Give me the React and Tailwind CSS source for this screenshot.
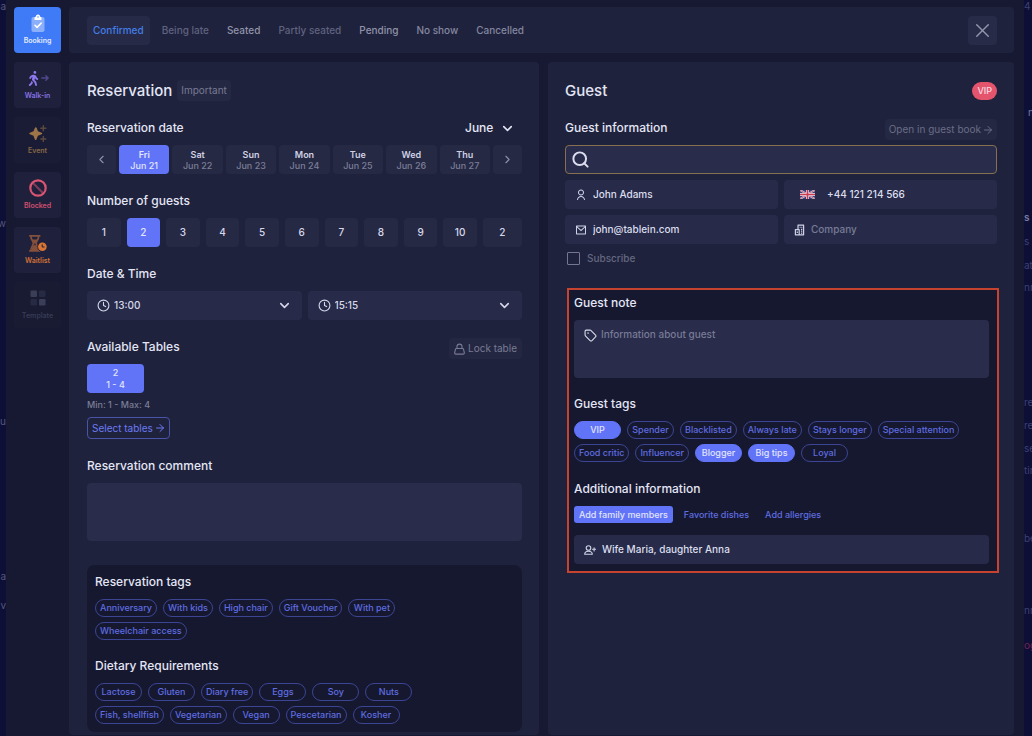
import React, { useState } from 'react';
import { ArrowRight, ChevronDown, ChevronLeft, ChevronRight, Clock, Search, Tag, X } from 'lucide-react';
import { FaPersonWalking } from 'react-icons/fa6';
import { RiMailLine, RiUserLine } from 'react-icons/ri';
import clsx from 'clsx';

const STATUSES = [
  { name: 'Confirmed', color: 'text-[#437ee6]' },
  { name: 'Being late', color: 'text-[#5f6380]' },
  { name: 'Seated', color: 'text-[#9093aa]' },
  { name: 'Partly seated', color: 'text-[#5f6380]' },
  { name: 'Pending', color: 'text-[#9093aa]' },
  { name: 'No show', color: 'text-[#8487a0]' },
  { name: 'Cancelled', color: 'text-[#8487a0]' },
];

const DAYS = [
  ['Fri', 'Jun 21'],
  ['Sat', 'Jun 22'],
  ['Sun', 'Jun 23'],
  ['Mon', 'Jun 24'],
  ['Tue', 'Jun 25'],
  ['Wed', 'Jun 26'],
  ['Thu', 'Jun 27'],
];

const RESERVATION_TAGS = ['Anniversary', 'With kids', 'High chair', 'Gift Voucher', 'With pet', 'Wheelchair access'];

const DIETARY_TAGS = [
  'Lactose', 'Gluten', 'Diary free', 'Eggs', 'Soy', 'Nuts',
  'Fish, shellfish', 'Vegetarian', 'Vegan', 'Pescetarian', 'Kosher',
];

const GUEST_TAGS = [
  'VIP', 'Spender', 'Blacklisted', 'Always late', 'Stays longer', 'Special attention',
  'Food critic', 'Influencer', 'Blogger', 'Big tips', 'Loyal',
];

function BookingIcon() {
  return (
    <svg width="14" height="18" viewBox="0 0 14 18" fill="none">
      <rect x="0.5" y="3" width="13" height="15" rx="2" fill="#fff" fillOpacity="0.4" />
      <path d="M3.500 6V3.800C3.500 3.200 4 3 4.600 3 4.800 1.500 5.700 0.400 7 0.400s2.200 1.100 2.400 2.600c.6 0 1.100.2 1.100.8V6z" fill="#fff" />
      <circle cx="7" cy="3" r="0.8" fill="#5f96f8" />
      <path d="M4 11.300l2.100 2.100 4-4.200" stroke="#fff" strokeWidth="1.6" strokeLinecap="round" strokeLinejoin="round" />
    </svg>
  );
}

function WalkInIcon() {
  return (
    <span className="flex items-center text-[#8d78ee]">
      <FaPersonWalking size={15} />
      <svg width="8" height="8" viewBox="0 0 8 8" fill="none" stroke="currentColor" strokeOpacity="0.45" strokeWidth="1.3" strokeLinecap="round" strokeLinejoin="round">
        <path d="M0.800 4h6.200M4.800 1.700L7.200 4 4.800 6.300" />
      </svg>
    </span>
  );
}

function EventIcon() {
  return (
    <svg width="18" height="17" viewBox="0 0 18 17" fill="none">
      <path d="M6.800 2.200c.5 0 .7.3.8.6l1.300 3.400 3.700 1.500c.8.300.8 1.300 0 1.600l-3.700 1.500-1.500 3.600c-.3.700-1.200.7-1.500 0l-1.400-3.600L.9 9.300c-.8-.3-.8-1.300 0-1.600l3.600-1.500L6 2.800c.2-.4.400-.6.800-.6z" fill="#9d7548" />
      <path d="M14.300 0.800v5M11.800 3.300h5M14.300 11.500v5M11.800 14h5" stroke="#9d7548" strokeOpacity="0.5" strokeWidth="1.4" strokeLinecap="round" />
    </svg>
  );
}

function BlockedIcon() {
  return (
    <svg width="18" height="18" viewBox="0 0 18 18" fill="none" stroke="#dc5471" strokeWidth="2.2">
      <path d="M3.500 3.500l11 11" strokeOpacity="0.5" />
      <circle cx="9" cy="9" r="7.7" />
    </svg>
  );
}

function WaitlistIcon() {
  return (
    <svg width="18" height="17" viewBox="0 0 18 17" fill="none">
      <path
        d="M.8.9h9.900M.8 15.800h9.900M1.900.9c0 4.300 2.400 4.800 2.400 7.400S1.900 11.700 1.900 15.600M9.600.9c0 4.300-2.400 4.800-2.400 7.400s2.400 3.400 2.400 7.300"
        stroke="#85503b"
        strokeWidth="1.7"
        strokeLinecap="round"
      />
      <path d="M2.500 15.600c.2-3 1.200-4.700 3.200-6.200 2 1.500 3.100 3.200 3.300 6.200zM3.200 4.600h5L6.700 8.600H4.800z" fill="#85503b" />
      <circle cx="13.4" cy="11.8" r="5" fill="#1f213c" />
      <circle cx="13.4" cy="11.8" r="4.3" fill="#d87534" />
      <path d="M13.200 9.700V12h1.900" stroke="#1d203a" strokeWidth="1" strokeLinecap="round" strokeLinejoin="round" />
    </svg>
  );
}

function TemplateIcon() {
  return (
    <svg width="16" height="16" viewBox="0 0 16 16">
      <rect x="0.5" y="0.5" width="6.5" height="6.5" rx="1.2" fill="#3b3e57" />
      <rect x="9" y="0.5" width="6.5" height="6.5" rx="1.2" fill="#272a43" />
      <rect x="0.5" y="9" width="6.5" height="6.5" rx="1.2" fill="#272a43" />
      <rect x="9" y="9" width="6.5" height="6.5" rx="1.2" fill="#3b3e57" />
    </svg>
  );
}

function LockIcon() {
  return (
    <svg width="11" height="12" viewBox="0 0 11 12" fill="none" stroke="currentColor" strokeWidth="1.1">
      <path d="M3 5.500V3.600a2.500 2.500 0 015 0v1.900" />
      <path d="M2.400 5.500h6.200c.5 0 .8.2.9.6l.8 3.500c.2.900-.3 1.500-1.100 1.500H1.800c-.8 0-1.300-.6-1.100-1.500l.8-3.500c.1-.4.400-.6.900-.6z" strokeLinejoin="round" />
    </svg>
  );
}

function CompanyIcon() {
  return (
    <svg width="11" height="12" viewBox="0 0 11 12" fill="none" stroke="currentColor" strokeWidth="1.2">
      <path d="M4 5V1.200h5.600v9.600H1.400V5.600h3.800v5.200" strokeLinejoin="round" />
      <path d="M5.700 3.300h.8M7.500 3.300h.8M7 5.300h1.300M7 7.200h1.300M7 9.100h1.300M3.300 7.600v1.500" />
    </svg>
  );
}

function AddPersonIcon() {
  return (
    <svg width="12" height="10" viewBox="0 0 12 10" fill="none" stroke="currentColor" strokeWidth="1.1" strokeLinecap="round" strokeLinejoin="round">
      <circle cx="4.5" cy="3" r="2.3" />
      <path d="M.7 9.300c0-2 1.300-3 3.800-3s3.800 1 3.800 3z" />
      <path d="M10.100 2.700v3.200M8.500 4.300h3.200" />
    </svg>
  );
}

function UkFlag() {
  return (
    <svg width="15" height="9" viewBox="0 0 15 9">
      <path fill="#39417a" d="M0 0h15v9H0z" />
      <path d="M0 0l15 9M15 0L0 9" stroke="#d5d3e6" strokeWidth="1.9" />
      <path d="M0 0l15 9M15 0L0 9" stroke="#cf4058" strokeWidth="0.7" />
      <path d="M7.500 0v9M0 4.500h15" stroke="#e2dfee" strokeWidth="3" />
      <path d="M7.500 0v9M0 4.500h15" stroke="#d03a50" strokeWidth="1.6" />
    </svg>
  );
}

const NAV = [
  { name: 'Booking', Icon: BookingIcon, style: 'bg-[#3f7bf7] text-[#e4ebfd]' },
  { name: 'Walk-in', Icon: WalkInIcon, style: 'bg-[#1f213c] text-[#8672e4]' },
  { name: 'Event', Icon: EventIcon, style: 'bg-[#1a1c35] text-[#886846]' },
  { name: 'Blocked', Icon: BlockedIcon, style: 'bg-[#1f213c] text-[#d04f6e]' },
  { name: 'Waitlist', Icon: WaitlistIcon, style: 'bg-[#1f213c] text-[#cc7037]' },
  { name: 'Template', Icon: TemplateIcon, style: 'bg-[#191b33] text-[#383b54]' },
];

// Words of the page behind the dialog that peek out at its sides
const BEHIND_LEFT = [
  { text: 'na', space: 'mt-0' },
  { text: 'w', space: 'mt-[205px]' },
  { text: 'u', space: 'mt-[186px]' },
  { text: 'a', space: 'mt-[143px]' },
  { text: 'v', space: 'mt-[17px]' },
];

const BEHIND_RIGHT = [
  { text: '4', space: 'mt-0' },
  { text: 'n', space: 'mt-[94px] pl-1 text-[#777aa0]' },
  { text: 's', space: 'mt-[93px] font-semibold text-[#777aa0]' },
  { text: 's', space: 'mt-[12px]' },
  { text: 'ati', space: 'mt-[12px]' },
  { text: 'nn', space: 'mt-[10px]' },
  { text: 're', space: 'mt-[103px]' },
  { text: 're', space: 'mt-[11px]' },
  { text: 'se', space: 'mt-[11px]' },
  { text: 'tin', space: 'mt-[10px]' },
  { text: 'be', space: 'mt-[56px]' },
  { text: 'nn', space: 'mt-[60px]' },
  { text: 'og', space: 'mt-[23px] text-[#6f2450]' },
];

function Heading({ children, className, id }) {
  return (
    <h3 id={id} className={clsx('text-[12px] leading-4 font-medium text-[#e4e6f6]', className)}>
      {children}
    </h3>
  );
}

function TagList({ tags, selected, onToggle, className }) {
  return (
    <div className={clsx('flex flex-wrap gap-x-[6px] gap-y-[5px]', className)}>
      {tags.map((tag) => (
        <button
          key={tag}
          type="button"
          aria-pressed={selected.includes(tag)}
          onClick={() => onToggle(tag)}
          className={clsx(
            'flex h-[18px] min-w-[47px] items-center justify-center rounded-full border px-[4px] text-[9px] leading-3 font-medium',
            selected.includes(tag)
              ? 'border-[#6174f8] bg-[#6174f8] text-[#e2e5fd]'
              : 'border-[#3c4594] text-[#5f6de0]'
          )}
        >
          {tag}
        </button>
      ))}
    </div>
  );
}

function TimeSelect({ label, value }) {
  return (
    <label className="flex h-[29px] flex-1 items-center rounded-[4px] bg-[#272b49] px-[10px] text-[#d6d8ea]">
      <Clock size={13} strokeWidth={2} />
      <select
        aria-label={label}
        defaultValue={value}
        className="ml-[4px] min-w-0 flex-1 appearance-none bg-transparent text-[10px] font-medium outline-none"
      >
        <option>{value}</option>
      </select>
      <ChevronDown size={15} strokeWidth={2.5} />
    </label>
  );
}

function Field({ icon, label, type = 'text', value, placeholder, wide }) {
  return (
    <label className="flex h-[29px] items-center rounded-[4px] bg-[#272b49] px-[10px] text-[#cfd2e6]">
      <span className={clsx('flex shrink-0 items-center', wide && 'px-[6px]')}>{icon}</span>
      <input
        type={type}
        aria-label={label}
        defaultValue={value}
        placeholder={placeholder}
        className="ml-[6px] min-w-0 flex-1 bg-transparent text-[10px] font-medium text-[#dcdeee] outline-none placeholder:text-[#777b96]"
      />
    </label>
  );
}

function ReservationPanel() {
  const [day, setDay] = useState('Fri');
  const [guests, setGuests] = useState(1);
  const [tags, setTags] = useState([]);

  const toggleTag = (tag) => {
    setTags((prev) => (prev.includes(tag) ? prev.filter((t) => t !== tag) : [...prev, tag]));
  };

  return (
    <section className="min-w-0 rounded-[4px] bg-[#1f223c] pt-[18px] pr-[17px] pb-[2px] pl-[18px]">
      <div className="flex h-[21px] items-center gap-[5px]">
        <h2 className="text-[15px] leading-5 font-medium text-[#e4e6f6]">Reservation</h2>
        <button type="button" className="h-[21px] rounded-[4px] bg-[#252843] px-[4px] text-[10px] text-[#787b94]">
          Important
        </button>
      </div>

      <div className="mt-[19px] flex items-center justify-between">
        <Heading>Reservation date</Heading>
        <label className="flex h-4 items-center gap-[6px] pr-[7px] text-[#e4e6f6]">
          <select aria-label="Month" className="appearance-none bg-transparent text-[12px] leading-4 font-medium outline-none">
            <option>June</option>
          </select>
          <ChevronDown size={15} strokeWidth={2.5} />
        </label>
      </div>
      <div className="mt-[9px] flex h-[29px] gap-[3px]">
        <button type="button" aria-label="Previous days" className="flex w-[29px] items-center justify-center rounded-[4px] bg-[#262944] text-[#8d90a8]">
          <ChevronLeft size={13} strokeWidth={2} />
        </button>
        {DAYS.map(([name, date]) => (
          <button
            key={name}
            type="button"
            onClick={() => setDay(name)}
            className={clsx(
              'flex flex-1 flex-col items-center justify-center rounded-[4px] text-[9px] leading-[11px] font-medium',
              day === name ? 'bg-[#6174f8] text-[#e2e5fd]' : 'bg-[#262944] text-[#7b7e97]'
            )}
          >
            <span className={clsx('font-semibold', day !== name && 'text-[#cfd1e3]')}>{name}</span>
            <span>{date}</span>
          </button>
        ))}
        <button type="button" aria-label="Next days" className="flex w-[29px] items-center justify-center rounded-[4px] bg-[#262944] text-[#8d90a8]">
          <ChevronRight size={13} strokeWidth={2} />
        </button>
      </div>

      <Heading className="mt-[19px]">Number of guests</Heading>
      <div className="mt-[9px] flex h-[29px] gap-[6px]">
        {[1, 2, 3, 4, 5, 6, 7, 8, 9, 10].map((n, i) => (
          <button
            key={n}
            type="button"
            onClick={() => setGuests(i)}
            className={clsx(
              'min-w-0 flex-1 rounded-[4px] text-[10px] font-medium',
              guests === i ? 'bg-[#6174f8] text-[#e2e5fd]' : 'bg-[#262944] text-[#d6d8ea]'
            )}
          >
            {n}
          </button>
        ))}
        <input
          aria-label="Other number of guests"
          defaultValue="2"
          className="w-[39px] rounded-[4px] bg-[#262944] text-center text-[10px] font-medium text-[#d6d8ea] outline-none"
        />
      </div>

      <Heading className="mt-[19px]">Date &amp; Time</Heading>
      <div className="mt-[9px] flex gap-[6px]">
        <TimeSelect label="From" value="13:00" />
        <TimeSelect label="To" value="15:15" />
      </div>

      <div className="mt-[18px] flex items-start justify-between">
        <Heading className="mt-px">Available Tables</Heading>
        <button type="button" className="flex h-[21px] items-center gap-[3px] rounded-[4px] bg-[#242742] px-[5px] text-[10px] text-[#787b94]">
          <LockIcon />
          Lock table
        </button>
      </div>
      <button type="button" className="mt-[5px] flex h-[29px] w-[57px] flex-col items-center justify-center rounded-[4px] bg-[#6174f8] text-[9px] leading-3 font-medium text-[#e2e5fd]">
        <span>2</span>
        <span>1 - 4</span>
      </button>
      <p className="mt-[6px] text-[9px] leading-3 font-medium text-[#7b7e97]">Min: 1 - Max: 4</p>
      <button type="button" className="mt-[6px] flex h-[22px] items-center gap-px rounded-[4px] border border-[#4953a8] pr-[3px] pl-1 text-[10px] text-[#6b7bf4]">
        Select tables
        <ArrowRight size={12} strokeWidth={2} />
      </button>

      <Heading id="reservation-comment" className="mt-[19px]">Reservation comment</Heading>
      <textarea
        aria-labelledby="reservation-comment"
        className="mt-[9px] block h-[58px] w-full resize-none rounded-[4px] bg-[#292c4a] p-2 text-[10px] text-[#d6d8ea] outline-none"
      />

      <div className="mt-[24px] rounded-lg bg-[#16182f] px-2 pt-[9px] pb-[8px]">
        <Heading>Reservation tags</Heading>
        <TagList tags={RESERVATION_TAGS} selected={tags} onToggle={toggleTag} className="mt-[9px] max-w-[340px]" />
        <Heading className="mt-[18px]">Dietary Requirements</Heading>
        <TagList tags={DIETARY_TAGS} selected={tags} onToggle={toggleTag} className="mt-[9px] max-w-[340px]" />
      </div>
    </section>
  );
}

function GuestPanel() {
  const [tags, setTags] = useState(['VIP', 'Blogger', 'Big tips']);
  const [extra, setExtra] = useState('Add family members');

  const toggleTag = (tag) => {
    setTags((prev) => (prev.includes(tag) ? prev.filter((t) => t !== tag) : [...prev, tag]));
  };

  return (
    <section className="min-w-0 rounded-[4px] bg-[#1f223c] px-[17px] pt-[18px]">
      <div className="flex h-[21px] items-center justify-between">
        <h2 className="text-[15px] leading-5 font-medium text-[#e4e6f6]">Guest</h2>
        <span className="flex h-[18px] items-center rounded-full bg-[#e5546d] px-[5px] text-[9px] font-medium text-[#f6dbe3]">VIP</span>
      </div>

      <div className="mt-[18px] flex h-[22px] items-start justify-between">
        <Heading className="mt-px">Guest information</Heading>
        <button type="button" className="flex h-[21px] items-center gap-px rounded-[4px] bg-[#252843] pr-[3px] pl-[4px] text-[10px] text-[#696d86]">
          Open in guest book
          <ArrowRight size={12} strokeWidth={2} />
        </button>
      </div>

      <label className="mt-[4px] flex h-[29px] items-center rounded-[4px] border border-[#86704f] bg-[#292c4b] px-[5px] text-[#dcdeee]">
        <Search size={19} strokeWidth={2.5} />
        <input
          type="search"
          aria-label="Search guest"
          className="ml-2 min-w-0 flex-1 bg-transparent text-[10px] font-medium outline-none"
        />
      </label>

      <div className="mt-[6px] grid grid-cols-2 gap-[6px]">
        <Field icon={<RiUserLine size={12} />} label="Name" value="John Adams" />
        <Field icon={<UkFlag />} label="Phone" type="tel" value="+44 121 214 566" wide />
        <Field icon={<RiMailLine size={12} />} label="Email" type="email" value="john@tablein.com" />
        <Field icon={<CompanyIcon />} label="Company" placeholder="Company" />
      </div>

      <label className="mt-2 flex h-[13px] items-center gap-[7px] pl-[2px] text-[10px] font-medium text-[#646880]">
        <input type="checkbox" className="size-[13px] appearance-none rounded-[1px] border border-[#74778f] checked:bg-[#6174f8]" />
        Subscribe
      </label>

      <div className="mt-[23px] -mr-[2px] ml-[2px] border-2 border-[#c5432f] bg-[#16182f] pt-[5px] pr-2 pb-[7px] pl-[5px]">
        <Heading id="guest-note">Guest note</Heading>
        <div className="mt-[9px] flex h-[58px] gap-[4px] rounded-[4px] bg-[#292c4a] px-[10px] text-[#dcdeee]">
          <Tag size={13} strokeWidth={2} className="mt-[9px] shrink-0" />
          <textarea
            aria-labelledby="guest-note"
            placeholder="Information about guest"
            className="min-w-0 flex-1 resize-none bg-transparent pt-[7px] text-[10px] leading-[14px] font-medium outline-none placeholder:text-[#777b96]"
          />
        </div>

        <Heading className="mt-[18px]">Guest tags</Heading>
        <TagList tags={GUEST_TAGS} selected={tags} onToggle={toggleTag} className="mt-[9px]" />

        <Heading className="mt-[19px]">Additional information</Heading>
        <div className="mt-[9px] flex gap-[6px]">
          {['Add family members', 'Favorite dishes', 'Add allergies'].map((name) => (
            <button
              key={name}
              type="button"
              onClick={() => setExtra(name)}
              className={clsx(
                'h-[17px] rounded-[3px] px-[5px] text-[9px] leading-3 font-medium',
                extra === name ? 'bg-[#6174f8] text-[#e2e5fd]' : 'text-[#5f6de0]'
              )}
            >
              {name}
            </button>
          ))}
        </div>
        <div className="mt-3">
          <Field icon={<AddPersonIcon />} label="Family members" value="Wife Maria, daughter Anna" />
        </div>
      </div>
    </section>
  );
}

export default function App() {
  const [status, setStatus] = useState('Confirmed');

  return (
    <div className="flex min-h-screen bg-[#0d0f37] font-['Inter',sans-serif]">
      <div aria-hidden="true" className="flex w-[6px] shrink-0 flex-col items-end overflow-hidden text-[10px] leading-3 text-[#555879]">
        {BEHIND_LEFT.map(({ text, space }) => (
          <span key={text} className={space}>{text}</span>
        ))}
      </div>

      <div role="dialog" aria-label="Reservation" className="flex min-w-0 flex-1 gap-2 bg-[#171932] pt-[7px] pr-[10px] pb-px pl-2">
        <nav className="flex w-[47px] shrink-0 flex-col gap-[9px]">
          {NAV.map(({ name, Icon, style }) => (
            <button
              key={name}
              type="button"
              className={clsx('flex h-[46px] flex-col items-center justify-end rounded-[4px] pb-[7px] text-[7px] leading-[11px] font-semibold', style)}
            >
              <span className="flex h-6 items-center">
                <Icon />
              </span>
              {name}
            </button>
          ))}
        </nav>

        <div className="flex min-w-0 flex-1 flex-col gap-[9px]">
          <header className="flex h-[46px] items-center justify-between rounded-[4px] bg-[#1f223c] pr-[17px] pl-[18px]">
            <div className="flex gap-[6px]">
              {STATUSES.map(({ name, color }) => (
                <button
                  key={name}
                  type="button"
                  onClick={() => setStatus(name)}
                  className={clsx('h-[29px] rounded-[4px] px-[6px] text-[10px] font-medium', color, status === name && 'bg-[#262a46]')}
                >
                  {name}
                </button>
              ))}
            </div>
            <button type="button" aria-label="Close" className="flex size-[29px] items-center justify-center rounded-[4px] bg-[#272b47] text-[#9295ab]">
              <X size={23} strokeWidth={1.5} />
            </button>
          </header>

          <main className="grid flex-1 grid-cols-[470fr_466fr] gap-[9px]">
            <ReservationPanel />
            <GuestPanel />
          </main>
        </div>
      </div>

      <div aria-hidden="true" className="flex w-2 shrink-0 flex-col overflow-hidden text-[10px] leading-3 text-[#3d4070]">
        {BEHIND_RIGHT.map(({ text, space }, i) => (
          <span key={i} className={space}>{text}</span>
        ))}
      </div>
    </div>
  );
}
